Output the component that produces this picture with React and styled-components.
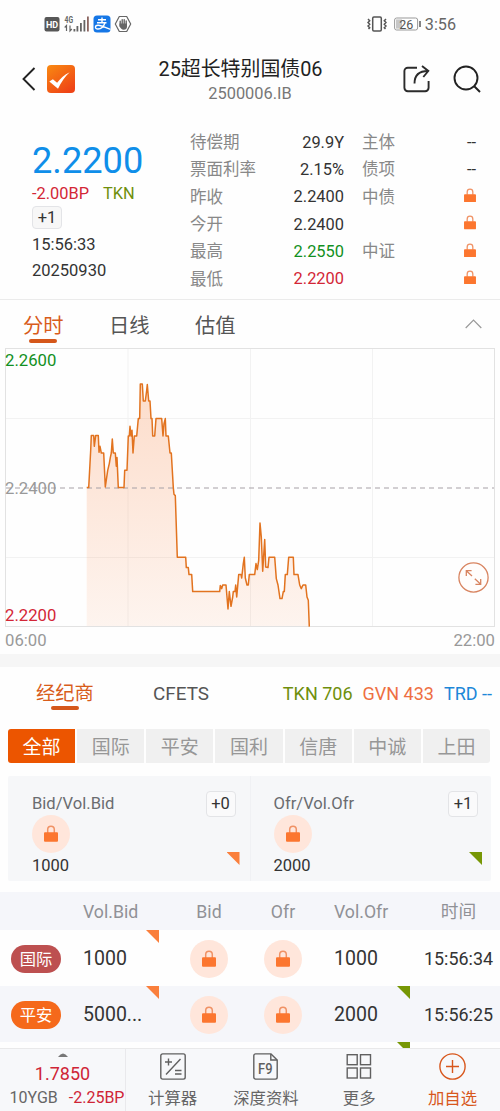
import React from "react";
import styled, { createGlobalStyle } from "styled-components";

const GlobalStyle = createGlobalStyle`
  * { box-sizing: border-box; }
  body {
    margin: 0;
    background: #fefefe;
    color: #333;
    font-family: Roboto, "Noto Sans CJK SC", sans-serif;
    font-size: 16.5px;
    -webkit-font-smoothing: antialiased;
  }
  svg { display: block; flex: none; }
`;

const Screen = styled.div`
  width: 500px;
  height: 1111px;
  overflow: hidden;
  display: flex;
  flex-direction: column;
  background: #fefefe;
`;

/* ---------- status bar ---------- */
const StatusBar = styled.div`
  height: 48px;
  padding: 0 44px;
  display: flex;
  align-items: center;
  justify-content: space-between;
`;
const StatusGroup = styled.div`
  display: flex;
  align-items: center;
  gap: ${(p) => p.$gap}px;
`;
const Clock = styled.span`
  font-size: 16.2px;
  line-height: 20px;
  color: #666;
  padding-top: 2px;
`;

/* ---------- title bar ---------- */
const TitleBar = styled.div`
  height: 62px;
  padding: 0 19px 0 21px;
  display: grid;
  grid-template-columns: 78px 1fr 78px;
  align-items: center;
`;
const TitleIcons = styled.div`
  display: flex;
  align-items: center;
  justify-content: ${(p) => (p.$end ? "flex-end" : "flex-start")};
  gap: ${(p) => p.$gap}px;
`;
const TitleText = styled.div`
  text-align: center;
  padding: 4px 22px 0 0;
  margin-right: -3px;
  display: flex;
  flex-direction: column;
  align-items: center;
`;
const BondName = styled.div`
  font-size: 19.9px;
  line-height: 24px;
  color: #222;
  white-space: nowrap;
  margin-left: -2px;
`;
const BondCode = styled.div`
  font-size: 16.4px;
  line-height: 23px;
  color: #777;
  margin-left: 17px;
`;

/* ---------- summary ---------- */
const Summary = styled.div`
  height: 190px;
  display: flex;
  border-bottom: 1px solid #ebebeb;
`;
const PriceColumn = styled.div`
  width: 190px;
  padding: 30px 0 0 32px;
  display: flex;
  flex-direction: column;
  align-items: flex-start;
`;
const Price = styled.div`
  font-size: 36.2px;
  line-height: 42px;
  color: #0f8ee9;
`;
const ChangeLine = styled.div`
  display: flex;
  gap: 14px;
  line-height: 24px;
  font-size: 16.4px;
  color: ${(p) => p.$color};
`;
const Tkn = styled.span`
  color: #6f8f0c;
`;
const CountBadge = styled.div`
  width: 30px;
  height: ${(p) => p.$h || 23}px;
  margin: ${(p) => p.$margin || 0};
  border: 1px solid #e3e4e7;
  border-radius: 4px;
  background: ${(p) => p.$bg || "#f7f7f7"};
  font-size: 16.5px;
  display: flex;
  align-items: center;
  justify-content: center;
  line-height: 20px;
  color: #333;
`;
const Stamp = styled.div`
  line-height: 26px;
  font-size: 16.5px;
`;
const QuoteTable = styled.div`
  width: 286px;
  padding-top: 18px;
  display: grid;
  grid-template-columns: 70px 84px 1fr 40px;
  grid-auto-rows: 27.3px;
  align-items: center;
  line-height: 27px;
  white-space: nowrap;
`;
const QuoteLabel = styled.span`
  color: #888;
  padding-top: 2px;
  padding-left: ${(p) => (p.$second ? 18 : 0)}px;
`;
const QuoteValue = styled.span`
  text-align: right;
  color: ${(p) => p.$color || "#333"};
  font-size: 16.4px;
  display: flex;
  justify-content: flex-end;
  padding-top: 1px;
`;
const RatingLock = styled.span`
  padding: 0 0 3px;
`;

/* ---------- tabs ---------- */
const ChartTabs = styled.div`
  height: 48px;
  padding: 0 18px 0 23px;
  display: flex;
  align-items: flex-start;
`;
const Tab = styled.div`
  width: ${(p) => p.$w}px;
  font-size: ${(p) => p.$size}px;
  color: ${(p) => (p.$active ? "#d85c1b" : "#555")};
  display: flex;
  flex-direction: column;
  align-items: flex-start;
  line-height: 26px;
  padding-top: ${(p) => p.$top}px;
`;
const TabLabel = styled.span`
  display: flex;
  flex-direction: column;
  align-items: center;
  white-space: nowrap;
`;
const Underline = styled.span`
  width: 28px;
  height: 4px;
  border-radius: 2px;
  background: #d5571a;
  margin-top: ${(p) => p.$mt || 0}px;
`;
const Collapse = styled.div`
  margin-left: auto;
  padding-top: 19px;
`;

/* ---------- chart ---------- */
const Chart = styled.div`
  position: relative;
  height: 280px;
  padding: 0 5px;
`;
const AxisLabel = styled.span`
  position: absolute;
  left: 5px;
  top: ${(p) => p.$top}px;
  font-size: 16.7px;
  line-height: 20px;
  color: ${(p) => p.$color};
`;
const ExpandButton = styled.div`
  position: absolute;
  right: 11px;
  bottom: 35px;
`;
const TimeAxis = styled.div`
  height: 26px;
  padding: 0 5px;
  display: flex;
  justify-content: space-between;
  line-height: 26px;
  font-size: 16.7px;
  color: #999;
`;
const Band = styled.div`
  height: 13px;
  background: #f6f6f6;
`;

/* ---------- brokers ---------- */
const BrokerBar = styled.div`
  height: 62px;
  padding: 0 8px 0 36px;
  display: flex;
`;
const Counts = styled.div`
  margin-left: auto;
  padding-top: 14px;
  display: flex;
  gap: 10px;
  font-size: 18px;
  line-height: 26px;
  white-space: nowrap;
`;
const Count = styled.span`
  color: ${(p) => p.$color};
`;
const Chips = styled.div`
  height: 34px;
  margin: 0 10px 0 8px;
  display: flex;
  gap: 2px;
  border-radius: 3px;
  overflow: hidden;
`;
const Chip = styled.div`
  flex: 1;
  display: flex;
  align-items: center;
  justify-content: center;
  font-size: 19px;
  line-height: 34px;
  padding-top: 3px;
  color: ${(p) => (p.$active ? "#fff" : "#979797")};
  background: ${(p) => (p.$active ? "#ec5500" : "#f0f0f0")};
`;

/* ---------- best bid / offer ---------- */
const BestCard = styled.div`
  height: 105px;
  margin: 13px 9px 11px 8px;
  display: grid;
  grid-template-columns: 1fr 1fr;
  background: #f6f7f9;
  border-radius: 2px;
`;
const BestSide = styled.div`
  padding: 15px ${(p) => (p.$right ? 13 : 14)}px 0 ${(p) => (p.$right ? 23 : 24)}px;
  display: flex;
  justify-content: space-between;
  border-left: ${(p) => (p.$right ? "1px solid #f0f1f4" : "none")};
`;
const BestInfo = styled.div`
  display: flex;
  flex-direction: column;
  line-height: 22px;
  padding-top: 1.5px;
`;
const BestLabel = styled.span`
  color: #6a6c70;
  font-size: 16.6px;
`;
const BestVolume = styled.span`
  font-size: 16.5px;
  line-height: 25px;
`;
const BestExtras = styled.div`
  display: flex;
  flex-direction: column;
  align-items: flex-end;
  justify-content: space-between;
  padding-bottom: 16px;
`;
const LockCircle = styled.span`
  width: 38px;
  height: 38px;
  border-radius: 50%;
  background: #ffe6db;
  display: flex;
  align-items: center;
  justify-content: center;
`;
const Corner = styled.span`
  width: 13px;
  height: 13px;
  background: ${(p) => (p.$green ? "#779705" : "#fa7f3c")};
  clip-path: polygon(0 0, 100% 0, 100% 100%);
  margin-right: -4px;
`;
const CellCorner = styled(Corner)`
  position: absolute;
  top: 0;
  right: 0;
  margin: 0;
`;

/* ---------- quotes list ---------- */
const Row = styled.div`
  flex: none;
  height: ${(p) => p.$h}px;
  display: grid;
  grid-template-columns: 83px 76px 100px 48px 103px 90px;
  background: ${(p) => (p.$shade ? "#f5f6fa" : "#fefefe")};
  color: ${(p) => (p.$head ? "#909196" : "#333")};
  font-size: ${(p) => (p.$head ? 17.7 : 19.5)}px;
  overflow: hidden;
`;
const Cell = styled.div`
  position: relative;
  display: flex;
  align-items: center;
  justify-content: ${(p) => (p.$center ? "center" : "flex-start")};
  padding-left: ${(p) => p.$pl || 0}px;
  font-size: ${(p) => (p.$size ? p.$size + "px" : "inherit")};
  line-height: 24px;
  white-space: nowrap;
  padding-top: ${(p) => p.$pt ?? 2}px;
`;
const Broker = styled.span`
  width: 50px;
  height: 28px;
  border-radius: 14px;
  display: flex;
  align-items: center;
  justify-content: center;
  padding-top: 2px;
  font-size: 16.3px;
  line-height: 26px;
  color: #fff;
  background: ${(p) => p.$color};
`;
const ListViewport = styled.div`
  height: 156px;
  flex: none;
  overflow: hidden;
  display: flex;
  flex-direction: column;
`;

/* ---------- bottom bar ---------- */
const BottomBar = styled.div`
  height: 63px;
  flex: none;
  display: flex;
  background: #f7f8fa;
  border-top: 1px solid #e9e9ea;
`;
const Ticker = styled.div`
  width: 126px;
  border-right: 1px solid #e9e9ec;
  display: flex;
  flex-direction: column;
  align-items: center;
`;
const TickerPrice = styled.div`
  margin-top: 5px;
  font-size: 18px;
  line-height: 24px;
  color: #cf2536;
`;
const TickerLine = styled.div`
  display: flex;
  gap: 11px;
  padding-left: 9px;
  font-size: 16px;
  line-height: 23px;
  color: #666;
  white-space: nowrap;
`;
const Down = styled.span`
  color: #cf2536;
`;
const Action = styled.div`
  width: 93.3px;
  padding-top: 4px;
  display: flex;
  flex-direction: column;
  align-items: center;
  gap: 7px;
  font-size: 16.4px;
  line-height: 24px;
  color: ${(p) => (p.$accent ? "#d8571c" : "#666")};
`;

/* ---------- icons ---------- */
const Lock = ({ w = 14, h = 17 }) => (
  <svg width={w} height={h} viewBox="0 0 14 17" fill="none">
    <path d="M3.7 8V4.6a3.3 3.3 0 0 1 6.6 0V8" stroke="#f09265" strokeWidth="1.5" />
    <rect x="0" y="7.2" width="14" height="9.5" rx="1" fill="#fc762f" />
  </svg>
);

const StatusLeftIcons = () => (
  <svg width="90" height="20" viewBox="0 0 90 20">
    <rect x="0.5" y="3" width="15" height="14.5" rx="2" fill="#575757" />
    <text x="8" y="13.7" fontSize="9" fontWeight="700" textAnchor="middle" fill="#fff" fontFamily="Roboto">HD</text>
    <text x="20.5" y="9" fontSize="8.5" fontWeight="700" fill="#666" fontFamily="Roboto" textLength="8.5" lengthAdjust="spacingAndGlyphs">4G</text>
    <path d="M22.5 17v-5.5l-1.8 2M26 11.5v5.5l1.8-2" stroke="#666" strokeWidth="1.2" fill="none" />
    <g fill="#646464">
      <rect x="29.5" y="15" width="1.8" height="2.5" />
      <rect x="32.5" y="12" width="1.8" height="5.5" />
      <rect x="36" y="9" width="1.8" height="8.5" />
      <rect x="39.5" y="6" width="1.8" height="11.5" />
      <rect x="43" y="2.5" width="1.8" height="15" fill="#8b6560" />
    </g>
    <rect x="49.5" y="1.5" width="17" height="17" rx="3.5" fill="#1677e6" />
    <path d="M54 5.7h8M58 3.5v5.2M53 8.7h9.5M61 8.7c-1.2 3.5-4 6.3-7 6.3-3.6 0-3.2-3.8.2-3.7 3.5.1 6.8 2.4 12.3 4" stroke="#fff" strokeWidth="1.4" fill="none" />
    <path d="M75.3 2.5h7.4l4 7.5-4 7.5h-7.4l-4-7.5z" stroke="#666" strokeWidth="1.2" fill="none" strokeLinejoin="round" />
    <path d="M76.2 11.5V7.3M78.2 10V5.6M80.2 10V5.6M82.2 11V7" stroke="#666" strokeWidth="1.4" strokeLinecap="round" />
    <path d="M75.5 9.5h7.5v3.2c0 2-1.3 3-3.3 3s-3-1.2-4.2-3.4z" fill="#666" />
  </svg>
);

const VibrateIcon = () => (
  <svg width="20" height="16" viewBox="0 0 20 16" fill="none" stroke="#555" strokeWidth="1.5">
    <rect x="5.7" y="1" width="8.6" height="14" rx="1.2" />
    <path d="M1 3l1.7 1.7L1 6.5l1.7 1.8L1 10l1.7 1.7L1.5 13" />
    <path d="M19 3l-1.7 1.7L19 6.5l-1.7 1.8L19 10l-1.7 1.7 1.2 1.3" />
  </svg>
);

const BatteryIcon = () => (
  <svg width="27" height="14" viewBox="0 0 27 14">
    <rect x="0.6" y="1" width="23" height="12" rx="2" fill="#fff" stroke="#999" strokeWidth="1" />
    <rect x="2" y="2.4" width="6" height="9.2" fill="#c7c7c7" />
    <text x="12.3" y="11.5" fontSize="12.5" textAnchor="middle" fill="#555" fontFamily="Roboto">26</text>
    <rect x="25.2" y="4" width="1.6" height="6" fill="#666" />
  </svg>
);

const BackIcon = () => (
  <svg width="16" height="26" viewBox="0 0 16 26" fill="none">
    <path d="M13.5 2L2.5 13l11 11" stroke="#222" strokeWidth="1.9" />
  </svg>
);

const AppLogo = () => (
  <svg width="28" height="28" viewBox="0 0 28 28">
    <defs>
      <linearGradient id="logo" x1="0" y1="0" x2="0.7" y2="1">
        <stop offset="0" stopColor="#f98a12" />
        <stop offset="1" stopColor="#ef4416" />
      </linearGradient>
    </defs>
    <rect width="28" height="28" rx="4" fill="url(#logo)" />
    <path d="M2.3 16.5l3.6-2.2 4.2 3.4c3.2-4.2 7.4-8.1 12.6-10.5-4.4 4.1-8.6 9.8-11.7 16.6z" fill="#fff" />
  </svg>
);

const ShareIcon = () => (
  <svg width="28" height="28" viewBox="0 0 28 28" fill="none" stroke="#2b2b2b" strokeWidth="1.9">
    <path d="M14 2.7H4.8A3.4 3.4 0 0 0 1.4 6.1v16.7a3.4 3.4 0 0 0 3.4 3.4h17.4a3.4 3.4 0 0 0 3.4-3.4V16" />
    <path d="M11.5 18.5C11.5 10.5 15.5 6 25 6M19 1l6.3 5-5 6" />
  </svg>
);

const SearchIcon = () => (
  <svg width="28" height="28" viewBox="0 0 28 28" fill="none" stroke="#222" strokeWidth="1.9">
    <circle cx="13" cy="13" r="11.5" />
    <path d="M21 21l6 6" />
  </svg>
);

const ChevronUp = () => (
  <svg width="17" height="10" viewBox="0 0 17 10" fill="none">
    <path d="M0.7 9L8.5 1.2 16.3 9" stroke="#999" strokeWidth="1.2" />
  </svg>
);

const ExpandIcon = () => (
  <svg width="31" height="31" viewBox="0 0 31 31" fill="none" stroke="#d88460" strokeWidth="1.3">
    <circle cx="15.5" cy="15.5" r="14.6" fill="#fffdfc" />
    <path d="M8.3 14V8.7H13.6M8.3 8.7l5.7 5.3M22.7 17V22.3h-5.3M22.7 22.3l-5.9-5.5" />
  </svg>
);

const CalculatorIcon = () => (
  <svg width="26" height="27" viewBox="0 0 26 27" fill="none" stroke="#606060" strokeWidth="1.4">
    <rect x="0.8" y="0.9" width="24.4" height="25.2" rx="1.8" />
    <path d="M5 9h7M8.5 5.5v7M20.5 6L6 21.5M15 17.5h6.5M15 21h6.5" />
  </svg>
);

const F9Icon = () => (
  <svg width="25" height="27" viewBox="0 0 25 27" fill="none" stroke="#606060" strokeWidth="1.4">
    <path d="M18 .9H2.6A1.8 1.8 0 0 0 .8 2.7v21.6a1.8 1.8 0 0 0 1.8 1.8h19.8a1.8 1.8 0 0 0 1.8-1.8V7z" />
    <path d="M17.8 1v6h6.3" />
    <text x="12.3" y="20.5" fontSize="14" fontWeight="500" textAnchor="middle" fill="#606060" stroke="none" fontFamily="Roboto" textLength="14.5" lengthAdjust="spacingAndGlyphs">F9</text>
  </svg>
);

const MoreIcon = () => (
  <svg width="26" height="27" viewBox="0 0 26 27" fill="none" stroke="#606060" strokeWidth="1.4">
    <rect x="1.2" y="1.7" width="10" height="10" />
    <rect x="14.5" y="1.7" width="10" height="10" />
    <rect x="1.2" y="15" width="10" height="10" />
    <rect x="14.5" y="15" width="10" height="10" />
  </svg>
);

const AddIcon = () => (
  <svg width="27" height="27" viewBox="0 0 27 27" fill="none" stroke="#d8571c" strokeWidth="1.4">
    <circle cx="13.5" cy="13.5" r="12.6" />
    <path d="M7 13.5h13M13.5 7v13" />
  </svg>
);

/* ---------- intraday line, in thirds of a pixel ---------- */
const MORNING = [
  [80, 352], [86, 352], [92, 240], [94, 196], [101, 196], [103, 228], [107, 196], [115, 196],
  [117, 246], [120, 228], [124, 248], [131, 248], [136, 350], [143, 300], [148, 280], [151, 262],
  [154, 248], [157, 206], [160, 248], [166, 248], [169, 288], [171, 262], [175, 352], [192, 352],
  [194, 300], [201, 300], [205, 197], [208, 197], [210, 168], [213, 197], [216, 180], [219, 248],
  [223, 197], [230, 197], [235, 145], [239, 145], [241, 41], [247, 41], [250, 92], [256, 92],
  [260, 60], [262, 43], [266, 92], [270, 92], [273, 145], [276, 145], [278, 197], [284, 197],
  [288, 145], [305, 145], [309, 197], [312, 160], [316, 145], [318, 197], [325, 197], [330, 248],
  [334, 248], [340, 352], [342, 372], [346, 376], [352, 561],
];
const AFTERNOON = [
  [17, 171], [19, 202], [25, 202], [27, 223], [35, 223], [38, 274], [119, 274], [121, 256],
  [125, 265], [128, 254], [138, 254], [144, 326], [148, 274], [153, 318], [158, 290], [160, 274],
  [165, 274], [167, 254], [170, 290], [176, 223], [183, 223], [185, 233], [190, 190], [193, 171],
  [196, 233], [201, 254], [205, 254], [208, 223], [224, 223], [228, 190], [232, 208], [236, 180],
  [240, 68], [244, 110], [248, 213], [254, 118], [257, 200], [264, 202], [267, 171], [284, 171],
  [289, 235], [294, 254], [300, 295], [306, 295], [310, 274], [313, 274], [316, 223], [322, 223],
  [326, 171], [340, 171], [342, 223], [354, 223], [359, 254], [364, 265], [369, 254], [377, 254],
  [381, 290], [385, 300], [388, 379],
];
const LINE = [...MORNING, ...AFTERNOON.map(([x, y]) => [x + 360, y + 390])]
  .map(([x, y]) => `${(55 + x / 3).toFixed(1)},${(22.3 + y / 3).toFixed(1)}`)
  .join(" ");

const PriceChart = () => (
  <svg width="490" height="280" viewBox="0 0 490 280" fill="none">
    <defs>
      <linearGradient id="area" x1="0" y1="0" x2="0" y2="1">
        <stop offset="0" stopColor="#f9823f" stopOpacity="0.27" />
        <stop offset="1" stopColor="#f9823f" stopOpacity="0.08" />
      </linearGradient>
    </defs>
    <path d="M123 1v277M245.5 1v277M367.5 1v277M1 70.5h488M1 209.5h488" stroke="#f2f2f2" />
    <polygon points={`81.7,278.5 ${LINE} 81.7,278.5`} fill="url(#area)" />
    <rect x="0.5" y="0.5" width="489" height="278" stroke="#e2e2e2" />
    <path d="M1 140h488" stroke="#a6a0a6" strokeDasharray="5 4" />
    <polyline points={LINE} stroke="#e2731f" strokeWidth="1.5" strokeLinejoin="round" />
  </svg>
);

const QUOTES = [
  ["待偿期", "29.9Y", null, "主体", "--"],
  ["票面利率", "2.15%", null, "债项", "--"],
  ["昨收", "2.2400", null, "中债", null],
  ["今开", "2.2400", null, "", null],
  ["最高", "2.2550", "#129022", "中证", null],
  ["最低", "2.2200", "#d32636", "", null],
];
const BROKERS = ["全部", "国际", "平安", "国利", "信唐", "中诚", "上田"];
const DEALS = [
  { name: "国际", color: "#bd5050", bid: "1000", ofr: "1000", time: "15:56:34", bidMark: true },
  { name: "平安", color: "#f5691b", bid: "5000...", ofr: "2000", time: "15:56:25", bidMark: true, ofrMark: true },
];

export default function App() {
  return (
    <>
      <GlobalStyle />
      <Screen>
        <StatusBar>
          <StatusLeftIcons />
          <StatusGroup $gap={7}>
            <VibrateIcon />
            <StatusGroup $gap={4}>
              <BatteryIcon />
              <Clock>3:56</Clock>
            </StatusGroup>
          </StatusGroup>
        </StatusBar>

        <TitleBar>
          <TitleIcons $gap={10}>
            <BackIcon />
            <AppLogo />
          </TitleIcons>
          <TitleText>
            <BondName>25超长特别国债06</BondName>
            <BondCode>2500006.IB</BondCode>
          </TitleText>
          <TitleIcons $end $gap={22}>
            <ShareIcon />
            <SearchIcon />
          </TitleIcons>
        </TitleBar>

        <Summary>
          <PriceColumn>
            <Price>2.2200</Price>
            <ChangeLine $color="#d32636">
              -2.00BP<Tkn>TKN</Tkn>
            </ChangeLine>
            <CountBadge $margin="0 0 3px">+1</CountBadge>
            <Stamp>15:56:33</Stamp>
            <Stamp>20250930</Stamp>
          </PriceColumn>
          <QuoteTable>
            {QUOTES.map(([label, value, color, second, rating]) => (
              <React.Fragment key={label}>
                <QuoteLabel>{label}</QuoteLabel>
                <QuoteValue $color={color}>{value}</QuoteValue>
                <QuoteLabel $second>{second}</QuoteLabel>
                <QuoteValue>{rating || <RatingLock><Lock w={12} h={14.5} /></RatingLock>}</QuoteValue>
              </React.Fragment>
            ))}
          </QuoteTable>
        </Summary>

        <ChartTabs>
          <Tab $w={86} $size={20.3} $top={13} $active>
            <TabLabel>分时<Underline /></TabLabel>
          </Tab>
          <Tab $w={86} $size={20.3} $top={13}>日线</Tab>
          <Tab $w={86} $size={20.3} $top={13}>估值</Tab>
          <Collapse><ChevronUp /></Collapse>
        </ChartTabs>

        <Chart>
          <PriceChart />
          <AxisLabel $top={3} $color="#129022">2.2600</AxisLabel>
          <AxisLabel $top={131} $color="#999">2.2400</AxisLabel>
          <AxisLabel $top={258} $color="#d32636">2.2200</AxisLabel>
          <ExpandButton><ExpandIcon /></ExpandButton>
        </Chart>
        <TimeAxis>
          <span>06:00</span>
          <span>22:00</span>
        </TimeAxis>
        <Band />

        <BrokerBar>
          <Tab $w={117} $size={19.3} $top={14} $active>
            <TabLabel>经纪商<Underline $mt={-1} /></TabLabel>
          </Tab>
          <Tab $w={60} $size={18.9} $top={14}>CFETS</Tab>
          <Counts>
            <Count $color="#6f8f0c">TKN 706</Count>
            <Count $color="#ee6f42">GVN 433</Count>
            <Count $color="#1c87d8">TRD --</Count>
          </Counts>
        </BrokerBar>
        <Chips>
          {BROKERS.map((name, i) => (
            <Chip key={name} $active={i === 0}>{name}</Chip>
          ))}
        </Chips>

        <BestCard>
          {[
            ["Bid/Vol.Bid", "1000", "+0"],
            ["Ofr/Vol.Ofr", "2000", "+1"],
          ].map(([label, volume, count], i) => (
            <BestSide key={label} $right={i === 1}>
              <BestInfo>
                <BestLabel>{label}</BestLabel>
                <LockCircle><Lock /></LockCircle>
                <BestVolume>{volume}</BestVolume>
              </BestInfo>
              <BestExtras>
                <CountBadge $h={26} $bg="#fafafb">{count}</CountBadge>
                <Corner $green={i === 1} />
              </BestExtras>
            </BestSide>
          ))}
        </BestCard>

        <ListViewport>
          <Row $h={38} $shade $head>
            <Cell />
            <Cell>Vol.Bid</Cell>
            <Cell $center>Bid</Cell>
            <Cell $center>Ofr</Cell>
            <Cell $pl={27}>Vol.Ofr</Cell>
            <Cell $center $pl={7}>时间</Cell>
          </Row>
          {DEALS.map((d, i) => (
            <Row key={d.name} $h={56} $shade={i === 1}>
              <Cell $pl={11}><Broker $color={d.color}>{d.name}</Broker></Cell>
              <Cell>{d.bid}{d.bidMark && <CellCorner />}</Cell>
              <Cell $center $pt={1}><LockCircle><Lock /></LockCircle></Cell>
              <Cell $center $pt={1}><LockCircle><Lock /></LockCircle></Cell>
              <Cell $pl={27}>{d.ofr}{d.ofrMark && <CellCorner $green />}</Cell>
              <Cell $center $pl={7} $size={17.9}>{d.time}</Cell>
            </Row>
          ))}
          <Row $h={56}>
            <Cell /><Cell /><Cell /><Cell />
            <Cell><CellCorner $green /></Cell>
            <Cell />
          </Row>
        </ListViewport>

        <BottomBar>
          <Ticker>
            <svg width="10" height="4" viewBox="0 0 10 4" style={{ marginTop: 4 }}>
              <path d="M0 4Q5-3 10 4z" fill="#777" />
            </svg>
            <TickerPrice>1.7850</TickerPrice>
            <TickerLine>10YGB<Down>-2.25BP</Down></TickerLine>
          </Ticker>
          <Action><CalculatorIcon />计算器</Action>
          <Action><F9Icon />深度资料</Action>
          <Action><MoreIcon />更多</Action>
          <Action $accent><AddIcon />加自选</Action>
        </BottomBar>
      </Screen>
    </>
  );
}
